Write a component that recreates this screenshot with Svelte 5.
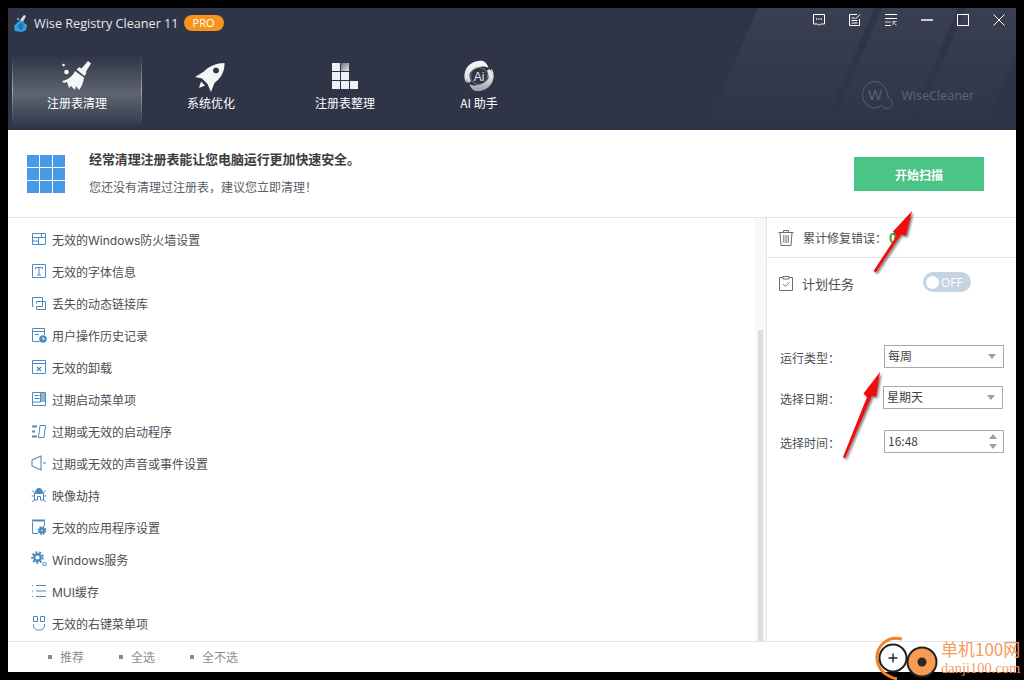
<script>
  const tabs = [
    { label: '注册表清理', icon: 'broom', active: true },
    { label: '系统优化', icon: 'rocket' },
    { label: '注册表整理', icon: 'grid' },
    { label: 'AI 助手', icon: 'ai' }
  ];
  const rows = [
    ['无效的Windows防火墙设置', 'wall'], ['无效的字体信息', 'font'], ['丢失的动态链接库', 'dll'],
    ['用户操作历史记录', 'history'], ['无效的卸载', 'uninstall'], ['过期启动菜单项', 'menu'],
    ['过期或无效的启动程序', 'startup'], ['过期或无效的声音或事件设置', 'sound'], ['映像劫持', 'bug'],
    ['无效的应用程序设置', 'app'], ['Windows服务', 'gear'], ['MUI缓存', 'list'], ['无效的右键菜单项', 'mouse']
  ];
  const grid = [0, 1, 2, 0, 0, 2, 0, 0, 0];
</script>

<div class="window">
  <header class="header">
    <svg class="stripes" width="1008" height="122" viewBox="0 0 1008 122">
      <defs>
        <linearGradient id="fade" x1="0" y1="0" x2="0" y2="1"><stop offset="0" stop-color="#fff" stop-opacity=".05"/><stop offset="1" stop-color="#fff" stop-opacity="0"/></linearGradient>
      </defs>
      <path d="M750 0h116l-52 122H698z" fill="url(#fade)"/>
      <path d="M874 0h76l-52 122h-76z" fill="url(#fade)"/>
      <path d="M958 0h50v44l-33 78h-69z" fill="url(#fade)"/>
    </svg>
    <div class="titlebar">
      <svg class="logo" width="16" height="18" viewBox="0 0 16 18"><path d="M1 12 7 6l7 5-1 5-4 2-7-1z" fill="#3f9fe0"/><path d="M4 13l4-5 3 3-2 6z" fill="#1f78bd"/><path d="M7 6l4-5 2 1-3 6z" fill="#cfdde8"/><circle cx="5" cy="5" r="1" fill="#9cc8e8"/></svg>
      <span class="apptitle">Wise Registry Cleaner 11</span>
      <span class="pro">PRO</span>
      <div class="controls">
        <svg width="12" height="12" viewBox="0 0 12 12" fill="none" stroke="#fff"><path d="M.5.5h11v9.500H7.500L6 11.500 4.500 10H.5z"/><path d="M3 5h1.200M5.400 5h1.200M7.800 5H9" stroke-width="1.400"/></svg>
        <svg width="12" height="12" viewBox="0 0 12 12" fill="none" stroke="#fff"><path d="M8 .5H.5v11h10V5"/><path d="M2.500 4h3.500M2.500 6.500h6M2.500 9h6M6.500 5L11 .5"/></svg>
        <svg width="12" height="12" viewBox="0 0 12 12" fill="none"><path d="M0 .5h12M0 4.500h12M0 11.500h6" stroke="#fff"/><path d="M0 8h6" stroke="#9a9da5" stroke-width="1.500"/><path d="M8 7.500h3.500M8 7.500V11M8 7.500l3.500 4" stroke="#c9ccd3"/></svg>
        <svg width="12" height="12" viewBox="0 0 12 12" fill="none" stroke="#c9ccd3"><path d="M0 6h12" stroke-width="2"/></svg>
        <svg width="12" height="12" viewBox="0 0 12 12" fill="none" stroke="#fff"><rect x=".5" y=".5" width="11" height="11"/></svg>
        <svg width="12" height="12" viewBox="0 0 12 12" fill="none" stroke="#fff"><path d="M.5.5l11 11M11.500.500l-11 11"/></svg>
      </div>
    </div>
    <nav class="nav">
      {#each tabs as t}
        <div class="tab" class:active={t.active}>
          <div class="tabicon">
            {#if t.icon === 'broom'}
              <svg width="32" height="32" viewBox="0 0 32 32" fill="#f3f5f7"><path d="M27 1l3 2.500-5.500 9-4.500-3.500z"/><path d="M15.500 9.500l3-2.500 7 6-2 3z"/><path d="M14 11l9 6.500c-.5 5-2.500 9.500-5 12.500l-3-4-1 4-4-4-2 2-2-6-3 1-2-2c6-1 11-5 13-10z"/><circle cx="2.500" cy="5" r="1.300"/><circle cx="5.500" cy="12" r="2.300"/></svg>
            {:else if t.icon === 'rocket'}
              <svg width="32" height="32" viewBox="0 0 32 32" fill="#f3f5f7"><path fill-rule="evenodd" d="M29.500 3C30 12 25 19 19.500 23L16 32 12.500 24 7 18.500 0 17l9-5.500C14 6 22 3 29.500 3zM21 7.500a3 3 0 1 0 .01 0z"/><path d="M6 21.500l4 4-6 2.500z"/></svg>
            {:else if t.icon === 'grid'}
              <div class="dfrag">{#each grid as o}<i class:f1={o === 1} class:f2={o === 2}></i>{/each}</div>
            {:else}
              <svg width="32" height="32" viewBox="0 0 32 32" fill="none">
                <defs>
                  <linearGradient id="ai" x1="0" y1="0" x2="0" y2="1"><stop offset="0" stop-color="#f8f8f8"/><stop offset=".55" stop-color="#e0e1e4"/><stop offset="1" stop-color="#95989f"/></linearGradient>
                  <mask id="swirl"><g fill="#fff">
                    <path d="M20 1C11 0 3 5 1.500 14c-.5 4 .5 7 2 9.500C3.500 15 9 7 20 6.500c2 0 4 .5 5.500 1.500C24.500 4.500 22.500 2 20 1z"/>
                    <path d="M20 1C11 0 3 5 1.500 14c-.5 4 .5 7 2 9.500C3.500 15 9 7 20 6.500c2 0 4 .5 5.500 1.500C24.500 4.500 22.500 2 20 1z" transform="rotate(180 16 16)"/>
                    <path d="M27 9c2 3 2.500 8 1 12-1 2-2 3.500-3.500 4.500 1.500-5 1.500-11-.5-15z"/>
                    <path d="M5 23c-2-3-2.500-8-1-12 1-2 2-3.500 3.500-4.500-1.500 5-1.500 11 .5 15z"/>
                  </g></mask>
                </defs>
                <rect width="32" height="32" fill="url(#ai)" mask="url(#swirl)"/>
                <circle cx="16" cy="16" r="8.500" stroke="#8f929a" stroke-width=".7"/>
                <text x="16" y="20.500" text-anchor="middle" font-size="12" fill="#e8e8e8" font-family="Liberation Sans">Ai</text>
              </svg>
            {/if}
          </div>
          <span class="tablabel">{t.label}</span>
        </div>
      {/each}
      <div class="brand">
        <svg width="35" height="28" viewBox="0 0 35 28" fill="none" stroke="#5b6170"><path d="M26 16C25 6 19 .5 13 .5 6 .5 .5 6.500 .5 14c0 7 6 13 12.500 13 3 0 4.500-1.500 6.500-3 2 3 5 4 7.500 3 3.500-1.500 4-6 1.500-9-1-1-2-1.500-2.500-2z"/><text x="13" y="19" text-anchor="middle" font-size="15" fill="#5b6170" stroke="none" font-family="Liberation Sans">W</text></svg>
        <span>WiseCleaner</span>
      </div>
    </nav>
  </header>

  <section class="banner">
    <div class="wingrid">{#each Array(9) as _}<i></i>{/each}</div>
    <div class="bannertext">
      <div class="headline">经常清理注册表能让您电脑运行更加快速安全。</div>
      <div class="subline">您还没有清理过注册表，建议您立即清理！</div>
    </div>
    <button class="scan">开始扫描</button>
  </section>

  <main class="body">
    <div class="left">
      <ul class="list">
        {#each rows as [label, icon]}
          <li>
            <svg class="ri" width="16" height="16" viewBox="0 0 16 16" fill="none" stroke="#4f8abd">
              {#if icon === 'wall'}
                <path d="M1.500 2.500h13v11h-13zM1.500 6.500h13M1.500 10h6M7.500 6.500v7M10.500 2.500v4"/>
              {:else if icon === 'font'}
                <path d="M1.500 1.500h13v13h-13z"/><path d="M4.500 6V4.500h7V6M8 4.500V12M6 12h4"/>
              {:else if icon === 'dll'}
                <path d="M2.500 11.500h-1v-9h10v4M5.500 6.500h9v8h-9v-3h6v-5M5.500 6.500v2"/>
              {:else if icon === 'history'}
                <path d="M8.500 14.500h-7v-13h12v6.500M1.500 4.500h12M4 7.500h4"/><circle cx="12" cy="12" r="3.800" fill="#4f8abd" stroke="none"/><path d="M12 10v2.200h1.800" stroke="#fff"/>
              {:else if icon === 'uninstall'}
                <path d="M1.500 1.500h13v13h-13zM1.500 4.500h13"/><path d="M6 8l4 4M10 8l-4 4" stroke-width="1.300"/>
              {:else if icon === 'menu'}
                <path d="M1.500 1.500h13v13h-13zM1.500 11h8M3.500 4.500h5M3.500 7.500h5M9.500 1.500v9.500"/><rect x="10" y="2" width="4" height="9" fill="#8fb4d4" stroke="none"/>
              {:else if icon === 'startup'}
                <path d="M1 3.500h5M1 8.500h3M1 13.500h5" stroke-width="2"/><path d="M9 2.500h5.500L13 14.500H7.500z"/>
              {:else if icon === 'sound'}
                <path d="M1 5l9-4v14l-9-4zM12 8h3" stroke-width="1.100"/>
              {:else if icon === 'bug'}
                <path d="M4.500 5.500c0-5.500 7-5.500 7 0z" fill="#4f8abd"/><path d="M1 3.500l3 2.500M15 3.500l-3 2.500M.5 9H4M15.500 9H12M1 15l3-2.500M15 15l-3-2.500M3.500 6.500h9v6.500H9.500V9.500h-3V13h-3z"/>
              {:else if icon === 'app'}
                <path d="M1 1.500h13" stroke-width="2"/><path d="M1.500 3v11.500H7M13.500 3v4"/><circle cx="11" cy="11.500" r="2" stroke-width="2.400"/><circle cx="11" cy="11.500" r="3.700" stroke-width="1.400" stroke-dasharray="1.800 1.100"/>
              {:else if icon === 'gear'}
                <circle cx="6.500" cy="6.500" r="3.300" stroke-width="2.400"/><circle cx="6.500" cy="6.500" r="5.300" stroke-width="2" stroke-dasharray="2 1.700"/><circle cx="13.500" cy="13" r="1.700"/>
              {:else if icon === 'list'}
                <path d="M5 2.500h10M5 8h10M5 13.500h10M1 2.500h1M1 8h1M1 13.500h1"/>
              {:else}
                <path d="M2.500 1.500h4v5h-4zM9.500 1.500h4v5h-4zM2.500 9v1.500a4.500 4.500 0 0 0 4.500 4.500h2a4.500 4.500 0 0 0 4.500-4.500V9"/>
              {/if}
            </svg>
            <span>{label}</span>
          </li>
        {/each}
      </ul>
      <div class="track"><div class="thumb"></div></div>
    </div>

    <aside class="side">
      <div class="stat">
        <svg width="16" height="17" viewBox="0 0 16 17" fill="none" stroke="#666d74"><path d="M.500 3.500h15M5.500 3.500V1.500h5v2M2 3.500l1 13h10l1-13M5.800 6v8M8 6v8M10.200 6v8"/></svg>
        <span>累计修复错误：</span><b>0</b>
      </div>
      <div class="plan">
        <svg width="16" height="17" viewBox="0 0 16 17" fill="none" stroke="#666d74"><path d="M5 2.500H1.500v13h13v-13H11M5 1.500h6V4H5z"/><path d="M5 9l2.500 2.500L11.500 7" stroke="#4f8abd"/></svg>
        <span>计划任务</span>
        <div class="toggle"><i></i><span>OFF</span></div>
      </div>
      <div class="form">
        <div class="field f1"><label for="t">运行类型：</label><div id="t" class="box">每周<em></em></div></div>
        <div class="field f2"><label for="d">选择日期：</label><div id="d" class="box">星期天<em></em></div></div>
        <div class="field f3"><label for="c">选择时间：</label><div id="c" class="box">16:48<span class="spin"><u></u><s></s></span></div></div>
      </div>
    </aside>
  </main>

  <footer class="footer">
    <span>推荐</span><span>全选</span><span>全不选</span>
  </footer>
</div>

<svg class="arrows" width="1024" height="680" viewBox="0 0 1024 680">
  <defs><filter id="sh"><feDropShadow dx="1.500" dy="1.500" stdDeviation="1" flood-color="#000" flood-opacity=".55"/></filter></defs>
  <g fill="#f00e0e" filter="url(#sh)">
    <path d="M873.500 271l23-35-3.500-4.500L912 211l-6 25-5-1.500-25 38z"/>
    <path d="M843 457l24-60-3.500-3.500L880 372l-4 25-4-1.500-27 63z"/>
  </g>
</svg>

<div class="watermark">
  <svg width="68" height="50" viewBox="0 0 68 50" fill="none">
    <path d="M27 4C12 0 1 12 2 24c1 10 8 17 20 20" stroke="#f58220" stroke-width="3"/>
    <circle cx="18" cy="23" r="13.500" stroke="#222" stroke-width="2" fill="#fff"/>
    <path d="M13.500 23h9M18 18.500v9" stroke="#222" stroke-width="1.400"/>
    <circle cx="47" cy="27" r="14.500" fill="#fb9a52" stroke="#222" stroke-width="2"/>
    <circle cx="47" cy="27" r="4.500" fill="#2a2a2a"/>
  </svg>
  <div class="wmtext"><div class="wm1">单机100网</div><div class="wm2">danji100.com</div></div>
</div>

<style>
  :global(body) { margin: 0; background: #000; }
  :global(#app) { font-family: "Noto Sans CJK SC", "Noto Sans", sans-serif; }
  .window { width: 1008px; height: 664px; position: absolute; left: 8px; top: 8px; background: #fff; display: flex; flex-direction: column; overflow: hidden; }
  .header { height: 122px; background: #2f3547; position: relative; flex: none; color: #fff; overflow: hidden; }
  .stripes { position: absolute; left: 0; top: 0; }
  .titlebar { position: relative; height: 30px; display: flex; align-items: center; padding-left: 5px; }
  .logo { margin-right: 5px; }
  .apptitle { font-family: "Open Sans", sans-serif; font-size: 12.650px; color: #e6e9ee; white-space: nowrap; }
  .pro { margin-left: 5px; width: 40px; height: 16px; border-radius: 8px; background: #f7941d; font: 11px/16px "Open Sans", sans-serif; text-align: center; color: #fff; }
  .controls { margin-left: auto; margin-right: 11px; display: flex; gap: 24px; position: relative; top: -3px; }
  .nav { position: relative; display: flex; padding-left: 2px; height: 75px; margin-top: 17px; }
  .tab { width: 134px; height: 70px; display: flex; flex-direction: column; align-items: center; box-sizing: border-box; padding-top: 5px; }
  .tab.active { width: 130px; margin: 0 2px; background: linear-gradient(#2f3547 0, #5e6470 55%, #353b4c 100%); border-left: 1px solid #6a6f7b; border-right: 1px solid #6a6f7b; border-image: linear-gradient(#2f3547, #a5a8af 50%, #2f3547) 1; }
  .tabicon { width: 32px; height: 32px; display: flex; align-items: center; justify-content: center; flex: none; }
  .tablabel { font-size: 12px; line-height: 18px; margin-top: 2px; color: #fff; white-space: nowrap; }
  .dfrag { display: grid; grid-template-columns: repeat(3, 8px); grid-auto-rows: 8px; gap: 1px; }
  .dfrag i { background: #eef1f5; }
  .dfrag i.f1 { background: linear-gradient(135deg, #6a7080, #e4e6ea); }
  .dfrag i.f2 { background: linear-gradient(135deg, #4c5263, #d4d7dc); }
  .brand { position: absolute; right: 42px; top: 26px; display: flex; align-items: center; gap: 5px; color: #5f6574; font: 12.500px "Open Sans", sans-serif; }
  .banner { height: 87px; flex: none; border-bottom: 1px solid #dfe6ee; display: flex; align-items: center; }
  .wingrid { margin-left: 19px; width: 38px; height: 38px; display: grid; grid-template-columns: repeat(3, 1fr); grid-template-rows: repeat(3, 1fr); gap: 1px; }
  .wingrid i { background: #459be6; }
  .bannertext { margin-left: 24px; flex: 1; margin-bottom: 3px; }
  .headline { font-size: 13px; font-weight: 700; line-height: 20px; color: #3c3c3c; letter-spacing: -.1px; }
  .subline { font-size: 12px; line-height: 18px; margin-top: 9px; color: #5a5f66; }
  .scan { margin-right: 32px; width: 130px; height: 34px; margin-top: 1px; border: 0; background: #4bc586; color: #fff; font: 700 12px "Noto Sans CJK SC", sans-serif; }
  .body { flex: 1; display: flex; min-height: 0; }
  .left { flex: 1; display: flex; min-width: 0; }
  .list { list-style: none; margin: 0; padding: 5px 0 0 23px; flex: 1; }
  .list li { height: 32px; display: flex; align-items: center; gap: 5px; font: 12px Inter, "Noto Sans CJK SC", sans-serif; color: #4a4f56; white-space: nowrap; }
  .ri { flex: none; }
  .track { width: 11px; background: #f8f8f8; padding: 112px 3px 0 3px; box-sizing: border-box; }
  .thumb { height: 100%; background: #dcdcdc; }
  .side { border-left: 1px solid #dde6f0; flex: none; box-sizing: border-box; width: 250px; font-size: 12px; color: #4a4f56; }
  .stat { height: 39px; border-bottom: 1px solid #dde6f0; display: flex; align-items: center; padding-left: 11px; }
  .stat span { margin-left: 9px; }
  .stat b { color: #2f9e2f; font-weight: 700; font-size: 13px; margin-left: 2px; }
  .plan { display: flex; align-items: center; padding: 15px 0 0 11px; height: 20px; }
  .plan > span { margin-left: 8px; font-size: 13px; }
  .toggle { margin-left: 69px; width: 48px; height: 20px; border-radius: 10px; background: #c6d3e1; display: flex; align-items: center; position: relative; top: -1px; }
  .toggle i { width: 13px; height: 13px; border-radius: 50%; background: #fff; margin-left: 3px; }
  .toggle span { color: #fff; font: 12px "Open Sans", sans-serif; margin-left: 2px; }
  .form { padding-top: 52px; padding-left: 13px; }
  .field { display: flex; align-items: center; height: 23px; position: relative; }
  .f2 { margin-top: 18px; }
  .f3 { margin-top: 21px; }
  .field label { width: 104px; flex: none; position: relative; top: 1px; }
  .f2 label { width: 103px; }
  .box { width: 120px; height: 23px; border: 1px solid #a9a9a9; box-sizing: border-box; padding-left: 3px; line-height: 19px; font-size: 12px; color: #444; position: relative; }
  .box em { position: absolute; right: 7px; top: 8px; border: 4.500px solid transparent; border-top: 5px solid #9aa0a8; border-bottom: 0; }
  .spin u { position: absolute; right: 6px; top: 3px; border: 4px solid transparent; border-bottom: 5px solid #9aa0a8; border-top: 0; }
  .spin s { position: absolute; right: 6px; bottom: 3px; border: 4px solid transparent; border-top: 5px solid #9aa0a8; border-bottom: 0; }
  .footer { height: 31px; flex: none; border-top: 1px solid #dfe6ee; display: flex; padding: 0 0 2px 40px; box-sizing: border-box; gap: 35px; align-items: center; font-size: 12px; color: #8a8f96; }
  .footer span { position: relative; padding-left: 12px; }
  .footer span::before { content: ""; position: absolute; left: 0; top: 7px; width: 4px; height: 4px; background: #8a8a8a; }
  .arrows { position: absolute; left: 0; top: 0; pointer-events: none; }
  .watermark { position: absolute; left: 875px; top: 635px; width: 149px; height: 45px; }
  .watermark svg { position: absolute; left: 0; top: 0; }
  .wmtext { position: absolute; left: 66px; top: 4px; color: #f89a5c; white-space: nowrap; }
  .wm1 { font: 17px/20px "Noto Sans CJK SC", serif; }
  .wm2 { font: 14.500px/19px "Liberation Serif", serif; }
</style>
